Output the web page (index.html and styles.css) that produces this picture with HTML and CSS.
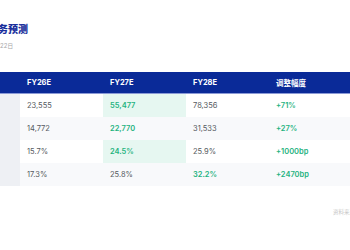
FILE: index.html
```html
<!DOCTYPE html>
<html>
<head>
<meta charset="utf-8">
<link rel="stylesheet" href="styles.css">
</head>
<body>
<div class="slide">
  <div class="head">
    <h1 class="title">财务预测</h1>
    <div class="date">2024年12月22日</div>
  </div>
  <table class="fin">
    <thead>
      <tr><th class="lab">指标</th><th>FY26E</th><th>FY27E</th><th>FY28E</th><th>调整幅度</th></tr>
    </thead>
    <tbody>
      <tr><td class="lab">营业收入</td><td>23,555</td><td class="hl up">55,477</td><td>78,356</td><td class="up">+71%</td></tr>
      <tr><td class="lab">净利润</td><td>14,772</td><td class="up">22,770</td><td>31,533</td><td class="up">+27%</td></tr>
      <tr><td class="lab">毛利率</td><td>15.7%</td><td class="hl up">24.5%</td><td>25.9%</td><td class="up">+1000bp</td></tr>
      <tr><td class="lab">净利率</td><td>17.3%</td><td>25.8%</td><td class="up">32.2%</td><td class="up">+2470bp</td></tr>
    </tbody>
  </table>
  <div class="src">资料来源：公司公告</div>
</div>
</body>
</html>
```

FILE: styles.css
```css
html, body {
  margin: 0;
  padding: 0;
  background: #ffffff;
}
body {
  width: 350px;
  height: 250px;
  overflow: hidden;
  font-family: Inter, "Noto Sans CJK SC", sans-serif;
}
.slide {
  padding-top: 23px;
}
.head {
  display: flex;
  flex-direction: column;
}
.title {
  margin: 0 0 0 -12px;
  font-size: 10px;
  line-height: 12px;
  font-weight: 900;
  color: #1a2f9c;
  white-space: nowrap;
}
.date {
  margin: 7px 0 0 -33px;
  font-size: 6px;
  line-height: 8px;
  color: #a8a8a8;
  white-space: nowrap;
}
.fin {
  margin: 22px 0 0 -100px;
  border-collapse: collapse;
  table-layout: fixed;
  width: 450px;
  font-size: 7.5px;
}
.fin th, .fin td {
  text-align: left;
  padding: 0 0 0 7px;
  white-space: nowrap;
}
.fin th {
  width: 76px;
  height: 21px;
  background: #0a2a98;
  color: #ffffff;
  font-weight: 700;
  border-bottom: 1px solid #8b9ad6;
}
.fin th.lab {
  width: 113px;
}
.fin td {
  height: 23px;
  color: #555a60;
}
.fin tbody tr:nth-child(even) td {
  background: #f8f9fb;
}
.fin td.lab {
  background: #eef0f4 !important;
  color: #333;
}
.fin td.up {
  color: #1fb37f;
  font-weight: 600;
}
.fin td.hl {
  background: #e6f7f1;
}
.src {
  margin: 22px 0 0 333px;
  font-size: 5.5px;
  color: #c8c8c8;
  white-space: nowrap;
}
```
